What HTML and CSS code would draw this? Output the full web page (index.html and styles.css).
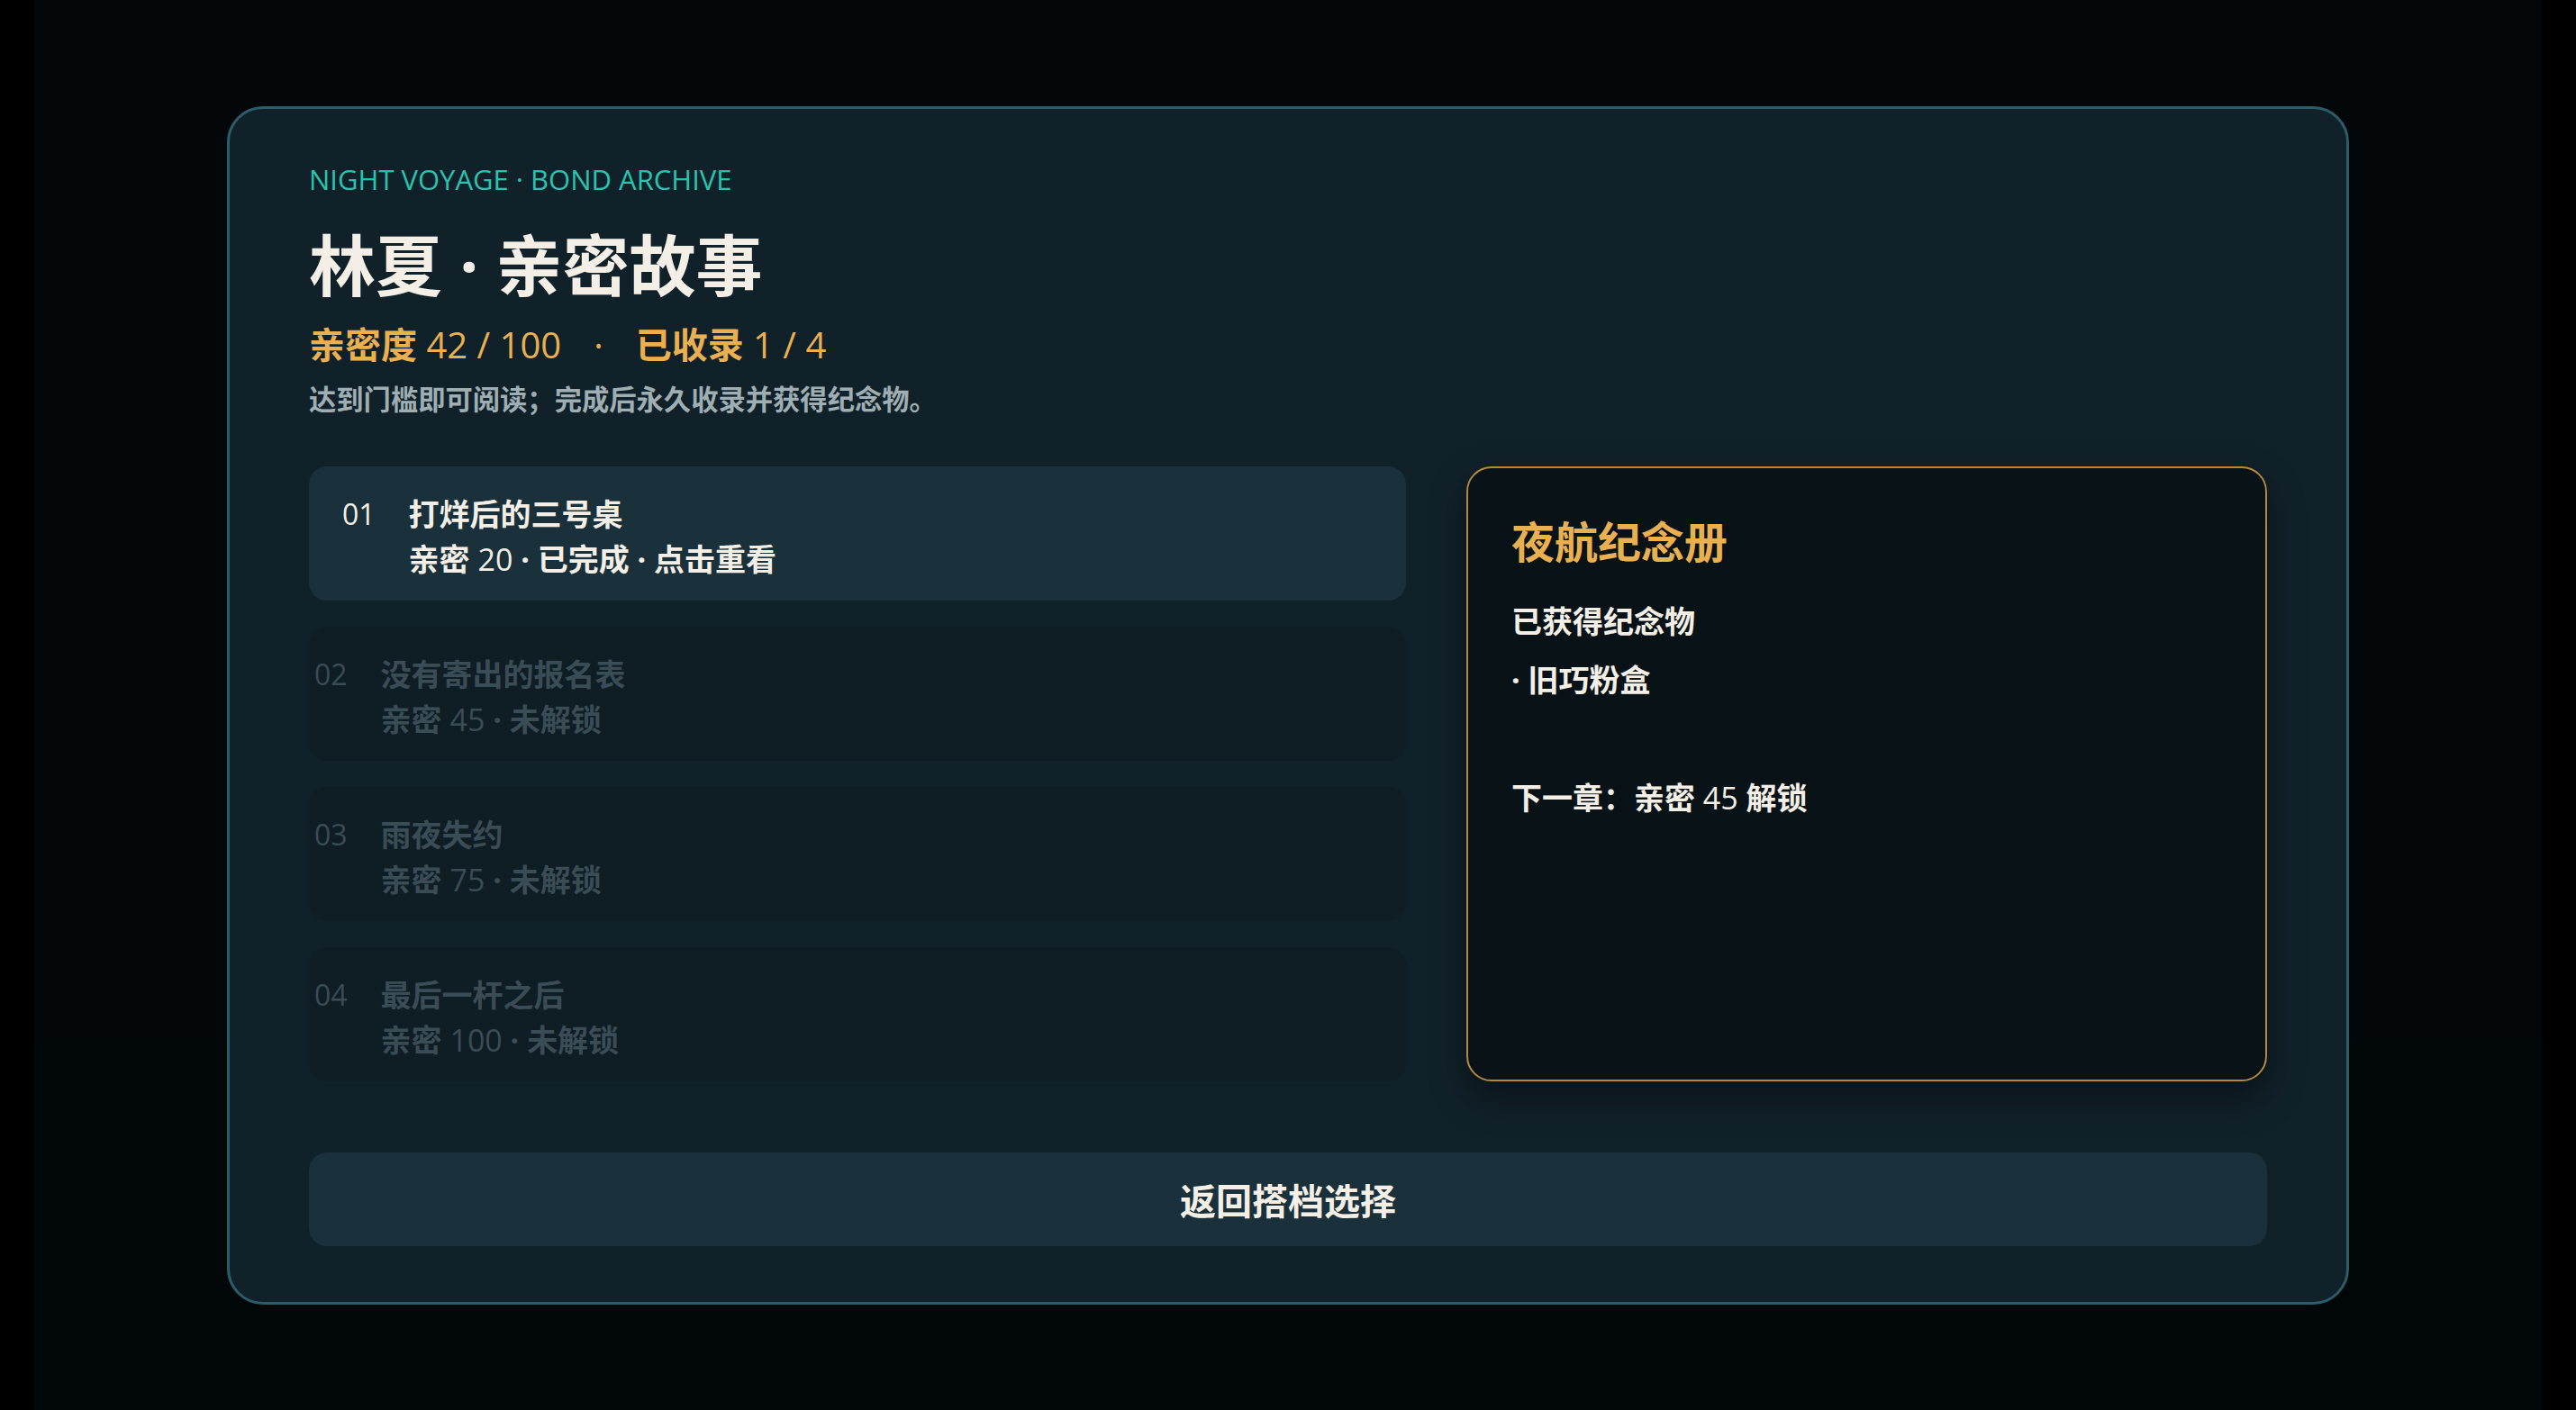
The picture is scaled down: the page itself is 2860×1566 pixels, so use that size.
FILE: index.html
```html
<!DOCTYPE html>
<html lang="zh-CN">
<head>
    <meta charset="UTF-8">
    <meta name="viewport" content="width=device-width, initial-scale=1.0">
    <title>林夏 · 亲密故事</title>
    <link rel="stylesheet" href="styles.css">
</head>
<body>

    <div class="page">
        <main class="card">

            <!-- Header -->
            <p class="eyebrow">NIGHT VOYAGE · BOND ARCHIVE</p>
            <h1 class="title">林夏 · 亲密故事</h1>
            <div class="stats">
                <span>亲密度 <span class="num">42 / 100</span></span>
                <span class="sep">·</span>
                <span>已收录 <span class="num">1 / 4</span></span>
            </div>
            <p class="hint">达到门槛即可阅读；完成后永久收录并获得纪念物。</p>

            <div class="layout">

                <!-- Chapter list -->
                <div class="chapters">
                    <div class="chapter done">
                        <span class="no">01</span>
                        <div>
                            <div class="name">打烊后的三号桌</div>
                            <div class="meta">亲密 <span class="num">20</span> · 已完成 · 点击重看</div>
                        </div>
                    </div>
                    <div class="chapter locked">
                        <span class="no">02</span>
                        <div>
                            <div class="name">没有寄出的报名表</div>
                            <div class="meta">亲密 <span class="num">45</span> · 未解锁</div>
                        </div>
                    </div>
                    <div class="chapter locked">
                        <span class="no">03</span>
                        <div>
                            <div class="name">雨夜失约</div>
                            <div class="meta">亲密 <span class="num">75</span> · 未解锁</div>
                        </div>
                    </div>
                    <div class="chapter locked">
                        <span class="no">04</span>
                        <div>
                            <div class="name">最后一杆之后</div>
                            <div class="meta">亲密 <span class="num">100</span> · 未解锁</div>
                        </div>
                    </div>
                </div>

                <!-- Keepsake album -->
                <aside class="album">
                    <h2>夜航纪念册</h2>
                    <p class="album-label">已获得纪念物</p>
                    <p class="album-item">· 旧巧粉盒</p>
                    <p class="album-next">下一章：亲密 <span class="num">45</span> 解锁</p>
                </aside>

            </div>

            <button class="back">返回搭档选择</button>

        </main>
    </div>

</body>
</html>
```

FILE: styles.css
```css
* {
    box-sizing: border-box;
}
body {
    margin: 0;
    background-color: #000;
    font-family: "Open Sans", "Noto Sans CJK SC", sans-serif;
    color: #f3efe6;
}
.page {
    margin: 0 38px;
    min-height: 100vh;
    padding-top: 118px;
    background: linear-gradient(to bottom, #04070a 0, #04070a 1153px, #020808 1153px);
}

.card {
    max-width: 2356px;
    margin: 0 auto;
    padding: 56px 88px 62px;
    background-color: #11212a;
    border: 3px solid #2c5c68;
    border-radius: 40px;
}
.eyebrow {
    margin: 0;
    font-size: 31px;
    line-height: 44px;
    color: #2cc2af;
}
.title {
    margin: 30px 0 0;
    font-size: 74px;
    line-height: 88px;
    font-weight: 700;
}
.stats {
    display: flex;
    gap: 36px;
    margin-top: 18px;
    font-size: 40px;
    line-height: 52px;
    font-weight: 700;
    color: #e9b052;
}
.num {
    font-weight: 400;
}
.sep {
    font-weight: 400;
}
.hint {
    margin: 15px 0 0;
    font-size: 30.3px;
    line-height: 40px;
    font-weight: 700;
    color: #9eaeb2;
}

.layout {
    display: grid;
    grid-template-columns: minmax(0, 1.37fr) minmax(0, 1fr);
    gap: 67px;
    margin-top: 54px;
}
.chapters {
    display: flex;
    flex-direction: column;
    gap: 29px;
}
.chapter {
    display: grid;
    grid-template-columns: auto 1fr;
    column-gap: 37px;
    padding: 28px 37px 21px;
    border-radius: 20px;
    font-size: 34px;
    line-height: 50px;
    font-weight: 700;
}
.chapter .no {
    font-size: 32px;
    font-weight: 400;
}
.chapter.done {
    background-color: #1a303b;
}
.chapter.locked {
    padding-left: 6px;
    background-color: #0f1d24;
    color: #3a4c55;
}

.album {
    padding: 52px 48px;
    background-color: #081217;
    border: 2px solid #b3893f;
    border-radius: 28px;
    box-shadow: 0 18px 40px rgba(0, 0, 0, 0.45);
}
.album h2 {
    margin: 0;
    font-size: 48px;
    line-height: 60px;
    font-weight: 700;
    color: #e9b052;
}
.album p {
    margin: 0;
    font-size: 34px;
    line-height: 50px;
    font-weight: 700;
}
.album-label {
    padding-top: 33px;
}
.album-item {
    padding-top: 15px;
}
.album-next {
    padding-top: 81px;
}

.back {
    display: block;
    width: 100%;
    height: 104px;
    margin-top: 79px;
    border: none;
    border-radius: 20px;
    background-color: #1a303b;
    color: #f3efe6;
    font-family: inherit;
    font-size: 40px;
    font-weight: 700;
    cursor: pointer;
}
```
